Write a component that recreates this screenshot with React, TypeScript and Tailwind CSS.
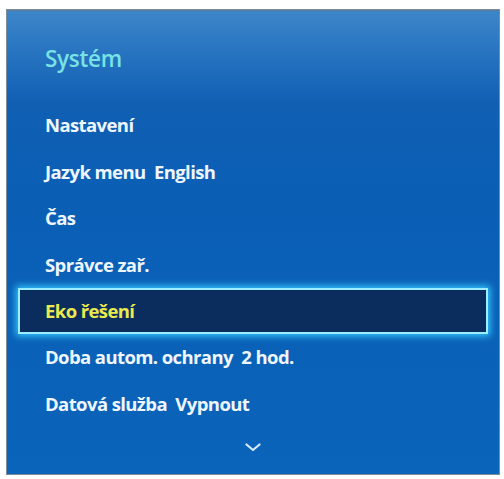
const rows = [
  { label: 'Nastavení' },
  { label: 'Jazyk menu  English' },
  { label: 'Čas' },
  { label: 'Správce zař.' },
  { label: 'Eko řešení', active: true },
  { label: 'Doba autom. ochrany  2 hod.' },
  { label: 'Datová služba  Vypnout' },
];

export default function App() {
  return (
    <div className="w-[504px] h-[479px] bg-white pt-[9px] pl-[6px] font-['Open_Sans',sans-serif]">
      <div className="w-[494px] h-[466px] border border-[#7d8c99] shadow-[inset_0_1px_0_#5b7a99] bg-[linear-gradient(to_bottom,#3e86c9_0%,#2a76c2_8%,#105fb3_20%,#0a5fb5_40%,#0a64ba_100%)] flex flex-col">
        {/* Title */}
        <div className="pt-[36px] pb-[30px] pl-[38px] leading-[26px] text-[22.5px] font-semibold text-[#78e2e4] tracking-[-0.3px]">
          Systém
        </div>

        {/* Menu rows */}
        <div className="flex flex-col">
          {rows.map((row) => (
            <div
              key={row.label}
              className={
                row.active
                  ? 'mx-[11px] h-[46px] flex items-center pl-[25px] border-2 border-[#9aeeff] bg-[#0a2d5e] shadow-[0_0_7px_2px_#35c8ff] text-[#eaea4e]'
                  : 'mx-[11px] h-[46.5px] flex items-center pl-[25px] border-2 border-transparent text-[#eef6ff]'
              }
            >
              <span className="text-[18.5px] font-bold tracking-[-0.6px] whitespace-pre">
                {row.label}
              </span>
            </div>
          ))}
        </div>

        {/* Scroll indicator */}
        <div className="flex justify-center pt-[16px]">
          <svg width="16" height="9" viewBox="0 0 16 9" fill="none">
            <path d="M1.5 1.5 L8 7 L14.5 1.5" stroke="#d6eaff" strokeWidth="2.2" strokeLinecap="round" strokeLinejoin="round" />
          </svg>
        </div>
      </div>
    </div>
  );
}
